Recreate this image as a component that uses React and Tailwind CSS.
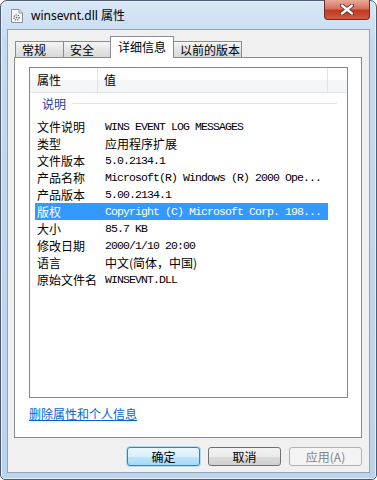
import React from "react";

const cjk = "font-['Noto_Sans_CJK_SC','Noto_Sans',sans-serif]";
const mono = "font-['Liberation_Mono','Noto_Sans_CJK_SC',monospace]";

const rows = [
  ["文件说明", "WINS EVENT LOG MESSAGES", true],
  ["类型", "应用程序扩展", false],
  ["文件版本", "5.0.2134.1", true],
  ["产品名称", "Microsoft(R) Windows (R) 2000 Ope...", true],
  ["产品版本", "5.00.2134.1", true],
  ["版权", "Copyright (C) Microsoft Corp. 198...", true],
  ["大小", "85.7 KB", true],
  ["修改日期", "2000/1/10 20:00", true],
  ["语言", "中文(简体，中国)", false],
  ["原始文件名", "WINSEVNT.DLL", true],
];

function FileIcon() {
  return (
    <svg width="12" height="14" viewBox="0 0 12 14" className="shrink-0">
      <path d="M0.5 0.5 H8 L11.5 4 V13.5 H0.5 Z" fill="#fdfdfd" stroke="#8a8f98" />
      <path d="M8 0.5 V4 H11.5" fill="#e4e6ea" stroke="#8a8f98" />
      <circle cx="5.5" cy="8.5" r="2.6" fill="none" stroke="#6f7680" strokeWidth="1.4" strokeDasharray="1.3 0.9" />
      <circle cx="5.5" cy="8.5" r="1" fill="#6f7680" />
    </svg>
  );
}

function Tab({ label, width, selected }) {
  if (selected) {
    return (
      <div
        className={`relative z-10 -ml-px h-[22px] border border-b-0 border-[#898c95] bg-white text-[12px] leading-[18px] text-black flex justify-center pt-[1px] ${cjk}`}
        style={{ width }}
      >
        {label}
      </div>
    );
  }
  return (
    <div
      className={`-ml-px mb-[1px] h-[16px] border border-b-0 border-[#898c95] bg-[linear-gradient(to_bottom,#f6f6f6,#e5e5e5_50%,#d8d8d8)] text-[12px] leading-[15px] text-black pl-[6px] ${cjk}`}
      style={{ width }}
    >
      {label}
    </div>
  );
}

function Button({ children, primary, disabled }) {
  let cls = "border-[#707070] bg-[linear-gradient(to_bottom,#f2f2f2,#ebebeb_50%,#dddddd_50%,#cfcfcf)] text-black";
  if (primary) cls = "border-[#3c7fb1] bg-[linear-gradient(to_bottom,#eaf6fd,#d9f0fc_50%,#bee6fd_50%,#a7d9f5)] text-black shadow-[0_0_0_1px_#b4dbf2]";
  if (disabled) cls = "border-[#adb2b5] bg-[#f4f4f4] text-[#838383]";
  return (
    <div className={`w-[73px] h-[19px] rounded-[3px] border flex items-center justify-center text-[12px] ${cjk} ${cls}`}>
      {children}
    </div>
  );
}

export default function App() {
  return (
    <div className="w-[377px] h-[480px] bg-white">
      <div className="w-[377px] h-[480px] rounded-t-[7px] rounded-b-[5px] border border-[#4d5e74] bg-[linear-gradient(to_bottom,#dae8f6,#c6daf0_40px,#bcd3ec)] shadow-[inset_0_0_0_1px_#e8f1fb] px-[6px] pb-[6px] flex flex-col">
        {/* title bar */}
        <div className="h-[28px] flex items-start relative">
          <div className="flex items-center gap-[8px] pl-[4px] pt-[8px]">
            <FileIcon />
            <span className="text-[12px] leading-[14px] text-black font-['Segoe_UI','Noto_Sans','Noto_Sans_CJK_SC',sans-serif]">
              winsevnt.dll 属性
            </span>
          </div>
          <div className="absolute right-[0px] top-[-1px] w-[46px] h-[20px] rounded-b-[4px] border border-t-0 border-[#6e2e25] bg-[linear-gradient(to_bottom,#e9a99a,#d4735f_45%,#c0391f_55%,#cf5a3f)] flex items-center justify-center">
            <svg width="14" height="11" viewBox="0 0 14 11">
              <path d="M2 1.5 L12 9.5 M12 1.5 L2 9.5" stroke="#5a231b" strokeWidth="4" strokeLinecap="round" />
              <path d="M2 1.5 L12 9.5 M12 1.5 L2 9.5" stroke="#ffffff" strokeWidth="2.4" strokeLinecap="round" />
            </svg>
          </div>
        </div>

        {/* client area */}
        <div className="flex-1 border border-[#8fa3bb] bg-[#f0f0f0] flex flex-col px-[6px]">
          <div className="mt-[6px] h-[22px] flex items-end pl-[2px]">
            <Tab label="常规" width={49} />
            <Tab label="安全" width={48} />
            <Tab label="详细信息" width={64} selected />
            <Tab label="以前的版本" width={69} />
          </div>

          <div className="-mt-px w-[348px] h-[381px] border border-[#898c95] bg-white flex flex-col pl-[14px] pt-[9px]">
            {/* list view */}
            <div className="w-[319px] h-[331px] border border-[#828790] bg-white flex flex-col">
              <div className={`h-[25px] flex text-[12px] text-black border-b border-[#e5e5e5] bg-[linear-gradient(to_bottom,#ffffff_50%,#f4f5f7_50%)] ${cjk}`}>
                <div className="w-[68px] pl-[7px] flex items-center border-r border-[#e2e3e5]">属性</div>
                <div className="w-[230px] pl-[6px] flex items-center border-r border-[#e2e3e5]">值</div>
              </div>

              <div className="mt-[2px] h-[17px] flex items-center pl-[12px] pr-[10px] gap-[6px]">
                <span className={`text-[12px] text-[#1e3a9a] ${cjk}`}>说明</span>
                <div className="flex-1 h-px bg-[#e2e4e8]" />
              </div>

              <div className="mt-[6px] flex flex-col">
                {rows.map(([k, v, isMono], i) => {
                  const sel = i === 5;
                  return (
                    <div
                      key={k}
                      className={`ml-[5px] w-[293px] h-[17px] flex items-center whitespace-nowrap ${sel ? "bg-[#3399ff] text-white" : "text-black"}`}
                    >
                      <span className={`w-[70px] pl-[2px] text-[12px] ${cjk}`}>{k}</span>
                      {isMono ? (
                        <span className={`text-[11.5px] tracking-[-0.9px] ${mono}`}>{v}</span>
                      ) : (
                        <span className={`text-[12px] ${cjk}`}>{v}</span>
                      )}
                    </div>
                  );
                })}
              </div>
            </div>

            <a className={`mt-[8px] w-fit text-[12px] leading-[16px] text-[#0066cc] underline ${cjk}`}>
              删除属性和个人信息
            </a>
          </div>

          <div className="mt-[9px] flex justify-end gap-[8px] pr-[1px]">
            <Button primary>确定</Button>
            <Button>取消</Button>
            <Button disabled>应用(A)</Button>
          </div>
        </div>
      </div>
    </div>
  );
}
